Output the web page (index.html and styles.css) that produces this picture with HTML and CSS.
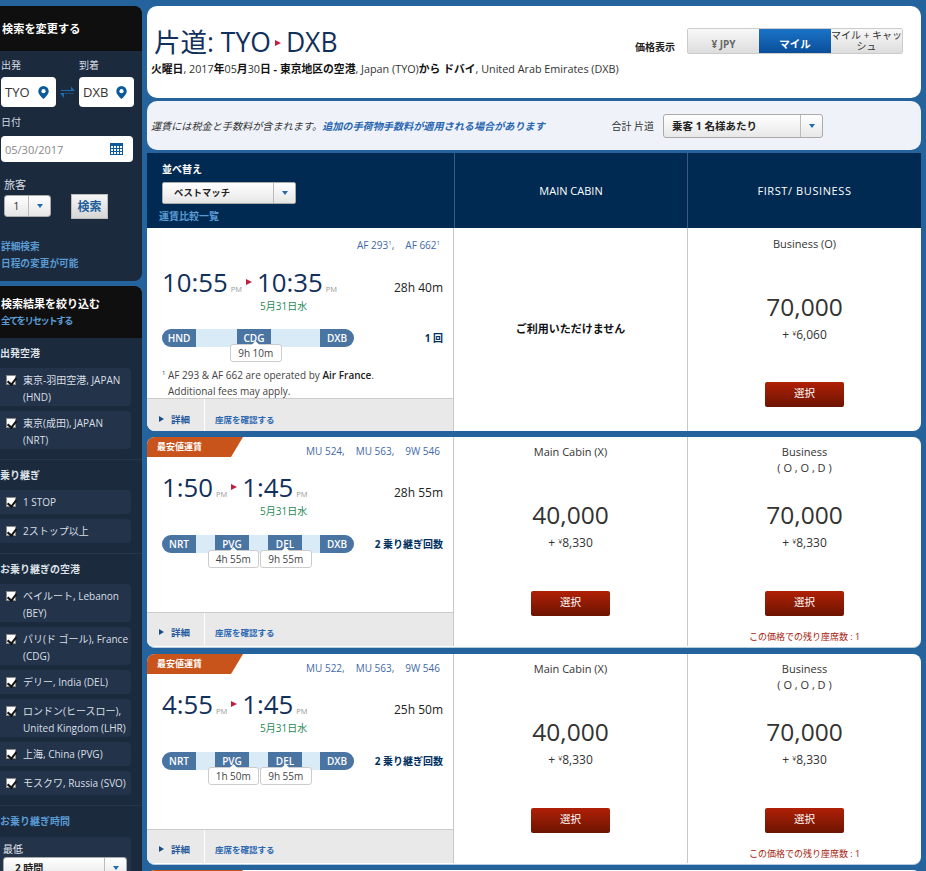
FILE: index.html
```html
<!DOCTYPE html>
<html lang="ja">
<head>
<meta charset="utf-8">
<title>片道: TYO DXB</title>
<link rel="stylesheet" href="styles.css">
</head>
<body>
<svg class="defs" width="0" height="0" aria-hidden="true">
  <symbol id="pin" viewBox="0 0 12 15"><path d="M6 0a6 6 0 0 0-6 6c0 3.600 3.700 6.600 6 9 2.300-2.400 6-5.400 6-9a6 6 0 0 0-6-6z" fill="#0a5a9c"/><circle cx="6" cy="6" r="2.400" fill="#fff"/></symbol>
</svg>
<div class="page">
  <aside class="side">
    <section class="panel search">
      <h2 class="panel-title">検索を変更する</h2>
      <div class="search-body">
        <div class="od-labels"><span>出発</span><span>到着</span></div>
        <div class="od-row">
          <div class="od-box">TYO<svg class="pin"><use href="#pin"/></svg></div>
          <svg class="swap" viewBox="0 0 15 14"><path d="M1 5h10V1.500L15 6H1zM14 8.500H4V13L0 8H14z" fill="#1f6cb0"/></svg>
          <div class="od-box">DXB<svg class="pin"><use href="#pin"/></svg></div>
        </div>
        <div class="label-date">日付</div>
        <div class="date-box">05/30/2017
          <svg class="cal" viewBox="0 0 13 12"><rect width="13" height="12" fill="#0a5a9c"/><path d="M1 3h2v2H1zM4 3h2v2H4zM7 3h2v2H7zM10 3h2v2h-2zM1 6h2v2H1zM4 6h2v2H4zM7 6h2v2H7zM10 6h2v2h-2zM1 9h2v2H1zM4 9h2v2H4zM7 9h2v2H7zM10 9h2v2h-2z" fill="#fff"/></svg>
        </div>
        <div class="label-pax">旅客</div>
        <div class="pax-row">
          <div class="pax-select"><span class="pax-val">1</span><span class="caret-cell"><i class="caret"></i></span></div>
          <div class="search-btn">検索</div>
        </div>
        <div class="side-links"><a>詳細検索</a><a>日程の変更が可能</a></div>
      </div>
    </section>
    <section class="panel filters">
      <header class="filter-head">
        <h2>検索結果を絞り込む</h2>
        <a>全てをリセットする</a>
      </header>
      <div class="filter-group">
        <h3>出発空港</h3>
        <label class="chk two"><i class="box"></i><span>東京-羽田空港, JAPAN<br>(HND)</span></label>
        <label class="chk two"><i class="box"></i><span>東京(成田), JAPAN<br>(NRT)</span></label>
      </div>
      <div class="filter-group">
        <h3>乗り継ぎ</h3>
        <label class="chk"><i class="box"></i><span>1 STOP</span></label>
        <label class="chk"><i class="box"></i><span>2ストップ以上</span></label>
      </div>
      <div class="filter-group">
        <h3>お乗り継ぎの空港</h3>
        <label class="chk two"><i class="box"></i><span>ベイルート, Lebanon<br>(BEY)</span></label>
        <label class="chk two"><i class="box"></i><span>パリ(ド ゴール), France<br>(CDG)</span></label>
        <label class="chk"><i class="box"></i><span>デリー, India (DEL)</span></label>
        <label class="chk two"><i class="box"></i><span>ロンドン(ヒースロー),<br>United Kingdom (LHR)</span></label>
        <label class="chk"><i class="box"></i><span>上海, China (PVG)</span></label>
        <label class="chk"><i class="box"></i><span>モスクワ, Russia (SVO)</span></label>
      </div>
      <div class="filter-group last">
        <h3 class="blue">お乗り継ぎ時間</h3>
        <div class="min-box">
          <div class="min-label">最低</div>
          <div class="min-select"><span class="min-val">2 時間</span><span class="caret-cell"><i class="caret"></i></span></div>
        </div>
      </div>
    </section>
  </aside>

  <main class="main">
    <section class="head-card">
      <div class="head-left">
        <h1>片道: TYO<i class="tri big"></i>DXB</h1>
        <p class="sub"><b>火曜日</b>, 2017<b>年</b>05<b>月</b>30<b>日 - 東京地区の空港</b>, Japan (TYO)<b>から ドバイ</b>, United Arab Emirates (DXB)</p>
      </div>
      <div class="price-view">
        <span class="pv-label">価格表示</span>
        <div class="seg">
          <span class="seg-a">¥ JPY</span>
          <span class="seg-b">マイル</span>
          <span class="seg-c">マイル + キャッシュ</span>
        </div>
      </div>
    </section>
    <section class="note-card">
      <p><em>運賃には税金と手数料が含まれます。</em><a>追加の手荷物手数料が適用される場合があります</a></p>
      <div class="total">
        <span>合計 片道</span>
        <div class="total-select"><b>乗客 1 名様あたり</b><span class="caret-cell"><i class="caret"></i></span></div>
      </div>
    </section>

    <div class="grid-head">
      <div class="sort">
        <div class="sort-label">並べ替え</div>
        <div class="sort-select"><b>ベストマッチ</b><span class="caret-cell"><i class="caret"></i></span></div>
        <a>運賃比較一覧</a>
      </div>
      <div class="cabin">MAIN CABIN</div>
      <div class="cabin wide">FIRST/ BUSINESS</div>
    </div>

    <article class="row r1">
      <div class="flight">
        <div class="flight-info">
          <div class="nums"><span>AF 293<sup>1</sup>,</span><span>AF 662<sup>1</sup></span></div>
          <div class="times">
            <div class="time-line"><span class="t">10:55</span><span class="pm">PM</span><i class="tri"></i><span class="t">10:35</span><span class="pm">PM</span></div>
            <div class="dur">28h 40m</div>
          </div>
          <div class="date-next">5月31日水</div>
          <div class="route">
            <div class="bar">
              <span class="ap end-l">HND</span><span class="ap mid">CDG</span><span class="ap end-r">DXB</span>
              <div class="lays one"><span class="lay">9h 10m</span></div>
            </div>
            <div class="stops">1 回</div>
          </div>
          <p class="foot"><sup>1</sup>AF 293 &amp; AF 662 are operated by <b>Air France</b>.<br>Additional fees may apply.</p>
        </div>
        <div class="actions"><a class="detail"><i class="tri-s"></i>詳細</a><a class="seats">座席を確認する</a></div>
      </div>
      <div class="fare none"><b>ご利用いただけません</b></div>
      <div class="fare">
        <div class="cls">Business (O)</div>
        <div class="miles">70,000</div>
        <div class="tax">+ <small>¥</small>6,060</div>
        <a class="sel">選択</a>
      </div>
    </article>

    <article class="row r2">
      <div class="flight">
        <div class="badge">最安値運賃</div>
        <div class="flight-info">
          <div class="nums"><span>MU 524,</span><span>MU 563,</span><span>9W 546</span></div>
          <div class="times">
            <div class="time-line"><span class="t">1:50</span><span class="pm">PM</span><i class="tri"></i><span class="t">1:45</span><span class="pm">PM</span></div>
            <div class="dur">28h 55m</div>
          </div>
          <div class="date-next">5月31日水</div>
          <div class="route">
            <div class="bar">
              <span class="ap end-l">NRT</span><span class="ap m1">PVG</span><span class="ap m2">DEL</span><span class="ap end-r">DXB</span>
              <div class="lays"><span class="lay">4h 55m</span><span class="lay">9h 55m</span></div>
            </div>
            <div class="stops">2 乗り継ぎ回数</div>
          </div>
        </div>
        <div class="actions"><a class="detail"><i class="tri-s"></i>詳細</a><a class="seats">座席を確認する</a></div>
      </div>
      <div class="fare">
        <div class="cls">Main Cabin (X)</div>
        <div class="miles">40,000</div>
        <div class="tax">+ <small>¥</small>8,330</div>
        <a class="sel">選択</a>
      </div>
      <div class="fare">
        <div class="cls">Business<br>( O , O , D )</div>
        <div class="miles">70,000</div>
        <div class="tax">+ <small>¥</small>8,330</div>
        <a class="sel">選択</a>
        <div class="left">この価格での残り座席数 : 1</div>
      </div>
    </article>

    <article class="row r2">
      <div class="flight">
        <div class="badge">最安値運賃</div>
        <div class="flight-info">
          <div class="nums"><span>MU 522,</span><span>MU 563,</span><span>9W 546</span></div>
          <div class="times">
            <div class="time-line"><span class="t">4:55</span><span class="pm">PM</span><i class="tri"></i><span class="t">1:45</span><span class="pm">PM</span></div>
            <div class="dur">25h 50m</div>
          </div>
          <div class="date-next">5月31日水</div>
          <div class="route">
            <div class="bar">
              <span class="ap end-l">NRT</span><span class="ap m1">PVG</span><span class="ap m2">DEL</span><span class="ap end-r">DXB</span>
              <div class="lays"><span class="lay">1h 50m</span><span class="lay">9h 55m</span></div>
            </div>
            <div class="stops">2 乗り継ぎ回数</div>
          </div>
        </div>
        <div class="actions"><a class="detail"><i class="tri-s"></i>詳細</a><a class="seats">座席を確認する</a></div>
      </div>
      <div class="fare">
        <div class="cls">Main Cabin (X)</div>
        <div class="miles">40,000</div>
        <div class="tax">+ <small>¥</small>8,330</div>
        <a class="sel">選択</a>
      </div>
      <div class="fare">
        <div class="cls">Business<br>( O , O , D )</div>
        <div class="miles">70,000</div>
        <div class="tax">+ <small>¥</small>8,330</div>
        <a class="sel">選択</a>
        <div class="left">この価格での残り座席数 : 1</div>
      </div>
    </article>
    <div class="next-row"><div class="badge"></div></div>
  </main>
</div>
</body>
</html>
```
FILE: styles.css
```css
* { box-sizing: border-box; }
html, body { margin: 0; padding: 0; height: 871px; overflow: hidden; }
body { background: #24639b; font-family: "Open Sans", "Noto Sans CJK JP", sans-serif; font-size: 10px; color: #333; }
a { text-decoration: none; }
.defs { position: absolute; }
.page { display: flex; align-items: flex-start; padding-top: 6px; height: 871px; overflow: hidden; }

/* sidebar */
.side { width: 142px; flex: none; display: flex; flex-direction: column; gap: 5px; }
.panel { background: #1b2a3d; border-radius: 0 8px 8px 0; overflow: hidden; color: #fff; }
.search { height: 275px; }
.panel-title { margin: 0; height: 45px; background: #0f0f0f; font-size: 11.200px; font-weight: 700; line-height: 45px; padding-left: 2px; color: #fff; }
.search-body { padding: 7px 0 0 1px; }
.od-labels { display: flex; font-size: 10px; line-height: 14px; height: 19px; color: #d5dbe2; }
.od-labels span:first-child { width: 78px; }
.od-row { display: flex; align-items: center; height: 30px; }
.od-box { width: 55px; height: 30px; background: #fff; border-radius: 4px; display: flex; align-items: center; justify-content: space-between; padding: 0 7px 0 4px; font-size: 13px; color: #333; }
.pin { width: 11px; height: 13px; }
.swap { width: 15px; height: 14px; margin: 0 4px; }
.label-date { font-size: 10px; line-height: 14px; margin-top: 8px; color: #d5dbe2; }
.date-box { margin-top: 7px; width: 132px; height: 26px; background: #fff; border-radius: 4px; display: flex; align-items: center; justify-content: space-between; padding: 0 10px 0 4px; font-size: 11px; color: #888; }
.cal { width: 13px; height: 12px; }
.label-pax { font-size: 11px; line-height: 15px; margin-top: 15px; padding-left: 3px; color: #d5dbe2; }
.pax-row { display: flex; align-items: flex-start; margin-top: 2px; padding-left: 3px; }
.pax-select { display: flex; width: 47px; height: 22px; margin-top: 1px; border: 1px solid #aaa; border-radius: 3px; background: linear-gradient(#fff, #e6e6e6); color: #333; }
.pax-val { width: 23px; text-align: center; font-size: 11px; line-height: 20px; }
.caret-cell { flex: 1; border-left: 1px solid #bbb; display: flex; align-items: center; justify-content: center; }
.caret { width: 0; height: 0; border: 3px solid transparent; border-top: 4px solid #1f6cb0; border-bottom: 0; }
.search-btn { margin-left: 20px; width: 37px; height: 25px; background: linear-gradient(#f6f6f6, #d6d6d6); border: 1px solid #bbb; font-size: 12px; font-weight: 700; color: #205f9c; text-align: center; line-height: 23px; }
.side-links { margin-top: 18.500px; display: flex; flex-direction: column; font-size: 9.700px; font-weight: 700; line-height: 17px; color: #5a9bd3; }

.filters { height: 600px; }
.filter-head { background: #0f0f0f; height: 52px; padding: 9px 0 0 1px; }
.filter-head h2 { margin: 0; font-size: 11px; line-height: 18px; font-weight: 700; color: #fff; }
.filter-head a { display: block; font-size: 9.500px; letter-spacing: -1.600px; font-weight: 700; line-height: 16px; color: #5a9bd3; }
.filter-group { padding: 5px 11px 5px 0; border-bottom: 1px solid #26364a; }
.filter-group.last { border-bottom: 0; }
.filter-group h3 { margin: 0 0 5px; font-size: 10px; font-weight: 700; line-height: 20px; color: #dde2e8; }
.filter-group h3.blue { color: #5a9bd3; margin-bottom: 5.500px; }
.chk { display: flex; align-items: flex-start; background: #23344a; border-radius: 0 4px 4px 0; margin-bottom: 5.500px; height: 23.500px; padding: 4px 0 0 6px; font-size: 10px; line-height: 17px; color: #d9dfe6; white-space: nowrap; }
.chk.two { height: 37.500px; }
.box { flex: none; width: 10px; height: 10px; margin: 3px 7px 0 0; background: #fff; border: 1px solid #8a8a8a; position: relative; }
.box::after { content: ""; position: absolute; left: 2px; top: 0; width: 4px; height: 7px; border: solid #111; border-width: 0 2px 2px 0; transform: rotate(38deg); }
.min-box { background: #23344a; border-radius: 0 4px 4px 0; padding: 4px 0 0 3px; height: 60px; }
.min-label { font-size: 10px; line-height: 16px; color: #e4e8ee; }
.min-select { display: flex; width: 124px; height: 22px; background: linear-gradient(#fff, #e6e6e6); border: 1px solid #aaa; border-radius: 3px; color: #222; font-size: 10px; }
.min-val { width: 100px; padding-left: 11px; line-height: 20px; font-weight: 700; }

/* main */
.main { width: 774px; flex: none; margin-left: 5px; display: flex; flex-direction: column; }
.head-card { height: 92px; background: #fff; border-radius: 10px; display: flex; justify-content: space-between; padding: 18px 18px 0 4px; }
.head-left h1 { margin: 0 0 0 3px; font-size: 26.500px; line-height: 36px; font-weight: 400; color: #12305c; white-space: nowrap; }
.tri { display: inline-block; width: 0; height: 0; border: 3px solid transparent; border-left: 6px solid #c01f3e; border-right: 0; }
.tri.big { vertical-align: 6px; margin: 0 5px 0 4px; }
.sub { margin: 2px 0 0 0; font-size: 10.800px; line-height: 14px; color: #333; white-space: nowrap; }
.sub b { color: #111; }
.price-view { display: flex; align-items: flex-start; padding-top: 4px; margin-left: auto; }
.pv-label { font-size: 10px; font-weight: 700; color: #222; margin-top: 11px; margin-right: 12px; }
.seg { display: flex; height: 26px; width: 216px; border-radius: 2px; overflow: hidden; border: 1px solid #ccc; }
.seg span { display: flex; align-items: center; justify-content: center; text-align: center; }
.seg-a { width: 71px; padding-top: 5px; background: linear-gradient(#f8f8f8, #ddd); color: #666; font-weight: 700; font-size: 10px; }
.seg-b { width: 72px; padding-top: 5px; background: linear-gradient(#1a73c6, #0a4e9a); color: #fff; font-weight: 700; font-size: 10.500px; }
.seg-c { flex: 1; background: linear-gradient(#f8f8f8, #ddd); color: #333; font-size: 10px; line-height: 11px; }
.note-card { height: 49px; margin-top: 3px; background: #eff3f9; border-radius: 10px; display: flex; align-items: center; justify-content: space-between; padding: 0 98px 0 4px; }
.note-card p { margin: 0; font-size: 10.130px; font-style: italic; color: #333; }
.note-card em { font-style: italic; }
.note-card a { color: #2a66b0; font-weight: 700; }
.total { display: flex; align-items: center; gap: 9px; font-size: 10px; color: #333; }
.total-select { display: flex; width: 160px; height: 24px; border: 1px solid #aaa; border-radius: 3px; background: linear-gradient(#fff, #e8e8e8); }
.total-select b { width: 136px; padding-left: 8px; font-size: 10.500px; color: #222; line-height: 22px; }
.grid-head { margin-top: 3px; height: 75px; background: #002a52; display: grid; grid-template-columns: 307px 233px 234px; color: #fff; }
.sort { padding: 9px 0 0 15px; }
.sort-label { font-size: 10px; font-weight: 700; line-height: 15px; }
.sort-select { display: flex; margin-top: 5px; width: 134px; height: 22px; border: 1px solid #aaa; border-radius: 2px; background: linear-gradient(#fff, #e6e6e6); }
.sort-select b { width: 110px; padding-left: 11px; font-size: 9.300px; color: #222; line-height: 20px; }
.sort a { display: block; margin: 5px 0 0 -3px; font-size: 10px; font-weight: 700; line-height: 15px; color: #5a9bd3; }
.cabin { border-left: 1px solid #3a5a7e; display: flex; align-items: center; justify-content: center; font-size: 11px; color: #fff; }
.cabin.wide { letter-spacing: .6px; }

.row { background: #fff; display: grid; grid-template-columns: 306px 234px 234px; position: relative; overflow: hidden; }
.r1 { height: 203px; margin-bottom: 6px; border-radius: 0 0 8px 8px; }
.r2 { height: 211px; margin-bottom: 6px; border-radius: 8px; padding-bottom: 1px; border-bottom: 1px solid #b5cde2; }
.flight { position: relative; display: flex; flex-direction: column; min-height: 0; }
.flight-info { flex: 1; min-height: 0; padding: 0 10px 0 15px; }
.nums { display: flex; justify-content: flex-end; gap: 11px; height: 26px; padding: 10px 3px 0 0; font-size: 10px; line-height: 15px; color: #3f69a8; }
.r2 .nums { height: 23px; padding-top: 7px; }
.nums sup { font-size: 6px; line-height: 0; }
.times { display: flex; justify-content: space-between; align-items: center; margin-top: 12px; height: 33px; }
.r2 .times { margin-top: 11px; }
.time-line { display: flex; align-items: flex-end; color: #12305c; }
.t { font-size: 25.800px; line-height: 33px; }
.pm { font-size: 7.500px; color: #999; margin: 0 4px 5px 3px; }
.time-line .tri { margin: 0 5px 14px 0; }
.time-line .pm:last-child { margin-right: 0; }
.dur { font-size: 12px; color: #222; margin-top: 10px; }
.date-next { font-size: 10px; color: #1f8a55; line-height: 14px; padding-left: 98px; }
.route { display: flex; justify-content: space-between; margin-top: 16px; }
.r2 .route { margin-top: 17px; }
.bar { position: relative; width: 192px; height: 18px; background: #daebf8; border-radius: 9px; }
.ap { position: absolute; top: 0; height: 18px; background: #4a74a2; color: #fff; font-size: 10px; font-weight: 600; line-height: 18px; text-align: center; width: 34px; }
.end-l { left: 0; border-radius: 9px 0 0 9px; }
.end-r { right: 0; border-radius: 0 9px 9px 0; }
.mid { left: 75px; }
.m1 { left: 53px; }
.m2 { left: 106px; }
.lays { position: absolute; top: 15px; left: 45.500px; display: flex; gap: 1px; }
.lays.one { left: 68px; }
.lay { display: block; position: relative; width: 51.500px; height: 18px; background: #fff; border: 1px solid #ccc; border-radius: 3px; font-size: 10px; line-height: 16px; text-align: center; color: #444; }
.lay::before { content: ""; position: absolute; top: -3px; left: 22px; width: 5px; height: 5px; background: #fff; transform: rotate(45deg); }
.stops { font-size: 10px; line-height: 18px; font-weight: 700; color: #00305f; white-space: nowrap; }
.foot { margin: 20px 0 0 0; padding-left: 6px; text-indent: -6px; font-size: 10px; line-height: 16px; color: #444; white-space: nowrap; }
.foot sup { display: inline-block; width: 6px; text-indent: 0; font-size: 6px; line-height: 0; }
.foot b { font-weight: 600; color: #222; }
.actions { flex: none; height: 33px; padding-top: 7px; background: #e9e9e9; border-top: 1px solid #ccc; display: flex; align-items: center; font-size: 9.500px; font-weight: 700; color: #2a66b0; }
.r2 .actions { height: 34px; padding-top: 5px; }
.detail { width: 58px; height: 100%; display: flex; align-items: center; padding-left: 12px; color: #2a5a9c; position: relative; }
.detail::after { content: ""; position: absolute; right: 0; top: -7px; bottom: 0; width: 1px; background: #fff; }
.r2 .detail::after { top: -5px; }
.tri-s { width: 0; height: 0; border: 3px solid transparent; border-left: 5px solid #1c4d85; border-right: 0; margin-right: 7px; }
.seats { padding-left: 10px; font-size: 8.500px; color: #2a66b0; }
.badge { position: absolute; top: 0; left: 0; width: 96px; height: 20px; background: #c8541c; clip-path: polygon(0 0, 100% 0, 84px 100%, 0 100%); color: #fff; font-size: 9px; font-weight: 700; line-height: 20px; padding-left: 10px; }
.fare { border-left: 1px solid #c8c8c8; display: flex; flex-direction: column; align-items: center; color: #333; }
.none { justify-content: center; padding-bottom: 4px; }
.none b { font-size: 11px; color: #111; }
.cls { margin-top: 8px; font-size: 11px; line-height: 16px; height: 32px; text-align: center; }
.r2 .cls { margin-top: 7px; }
.miles { margin-top: 22px; font-size: 24.500px; line-height: 34px; color: #333; }
.tax { font-size: 12px; line-height: 20px; }
.tax small { font-size: 7px; vertical-align: 3px; }
.sel { display: block; margin-top: 37px; width: 79px; height: 25px; border-radius: 2px; background: linear-gradient(#b02005, #6c1402); color: #fff; font-size: 10.500px; line-height: 22px; text-align: center; }
.r2 .sel { margin-top: 38px; }
.left { margin-top: 14px; font-size: 9px; line-height: 14px; color: #a5200c; }
.next-row { height: 40px; margin-top: -1px; background: #fff; position: relative; border-radius: 8px 8px 0 0; overflow: hidden; }
```
